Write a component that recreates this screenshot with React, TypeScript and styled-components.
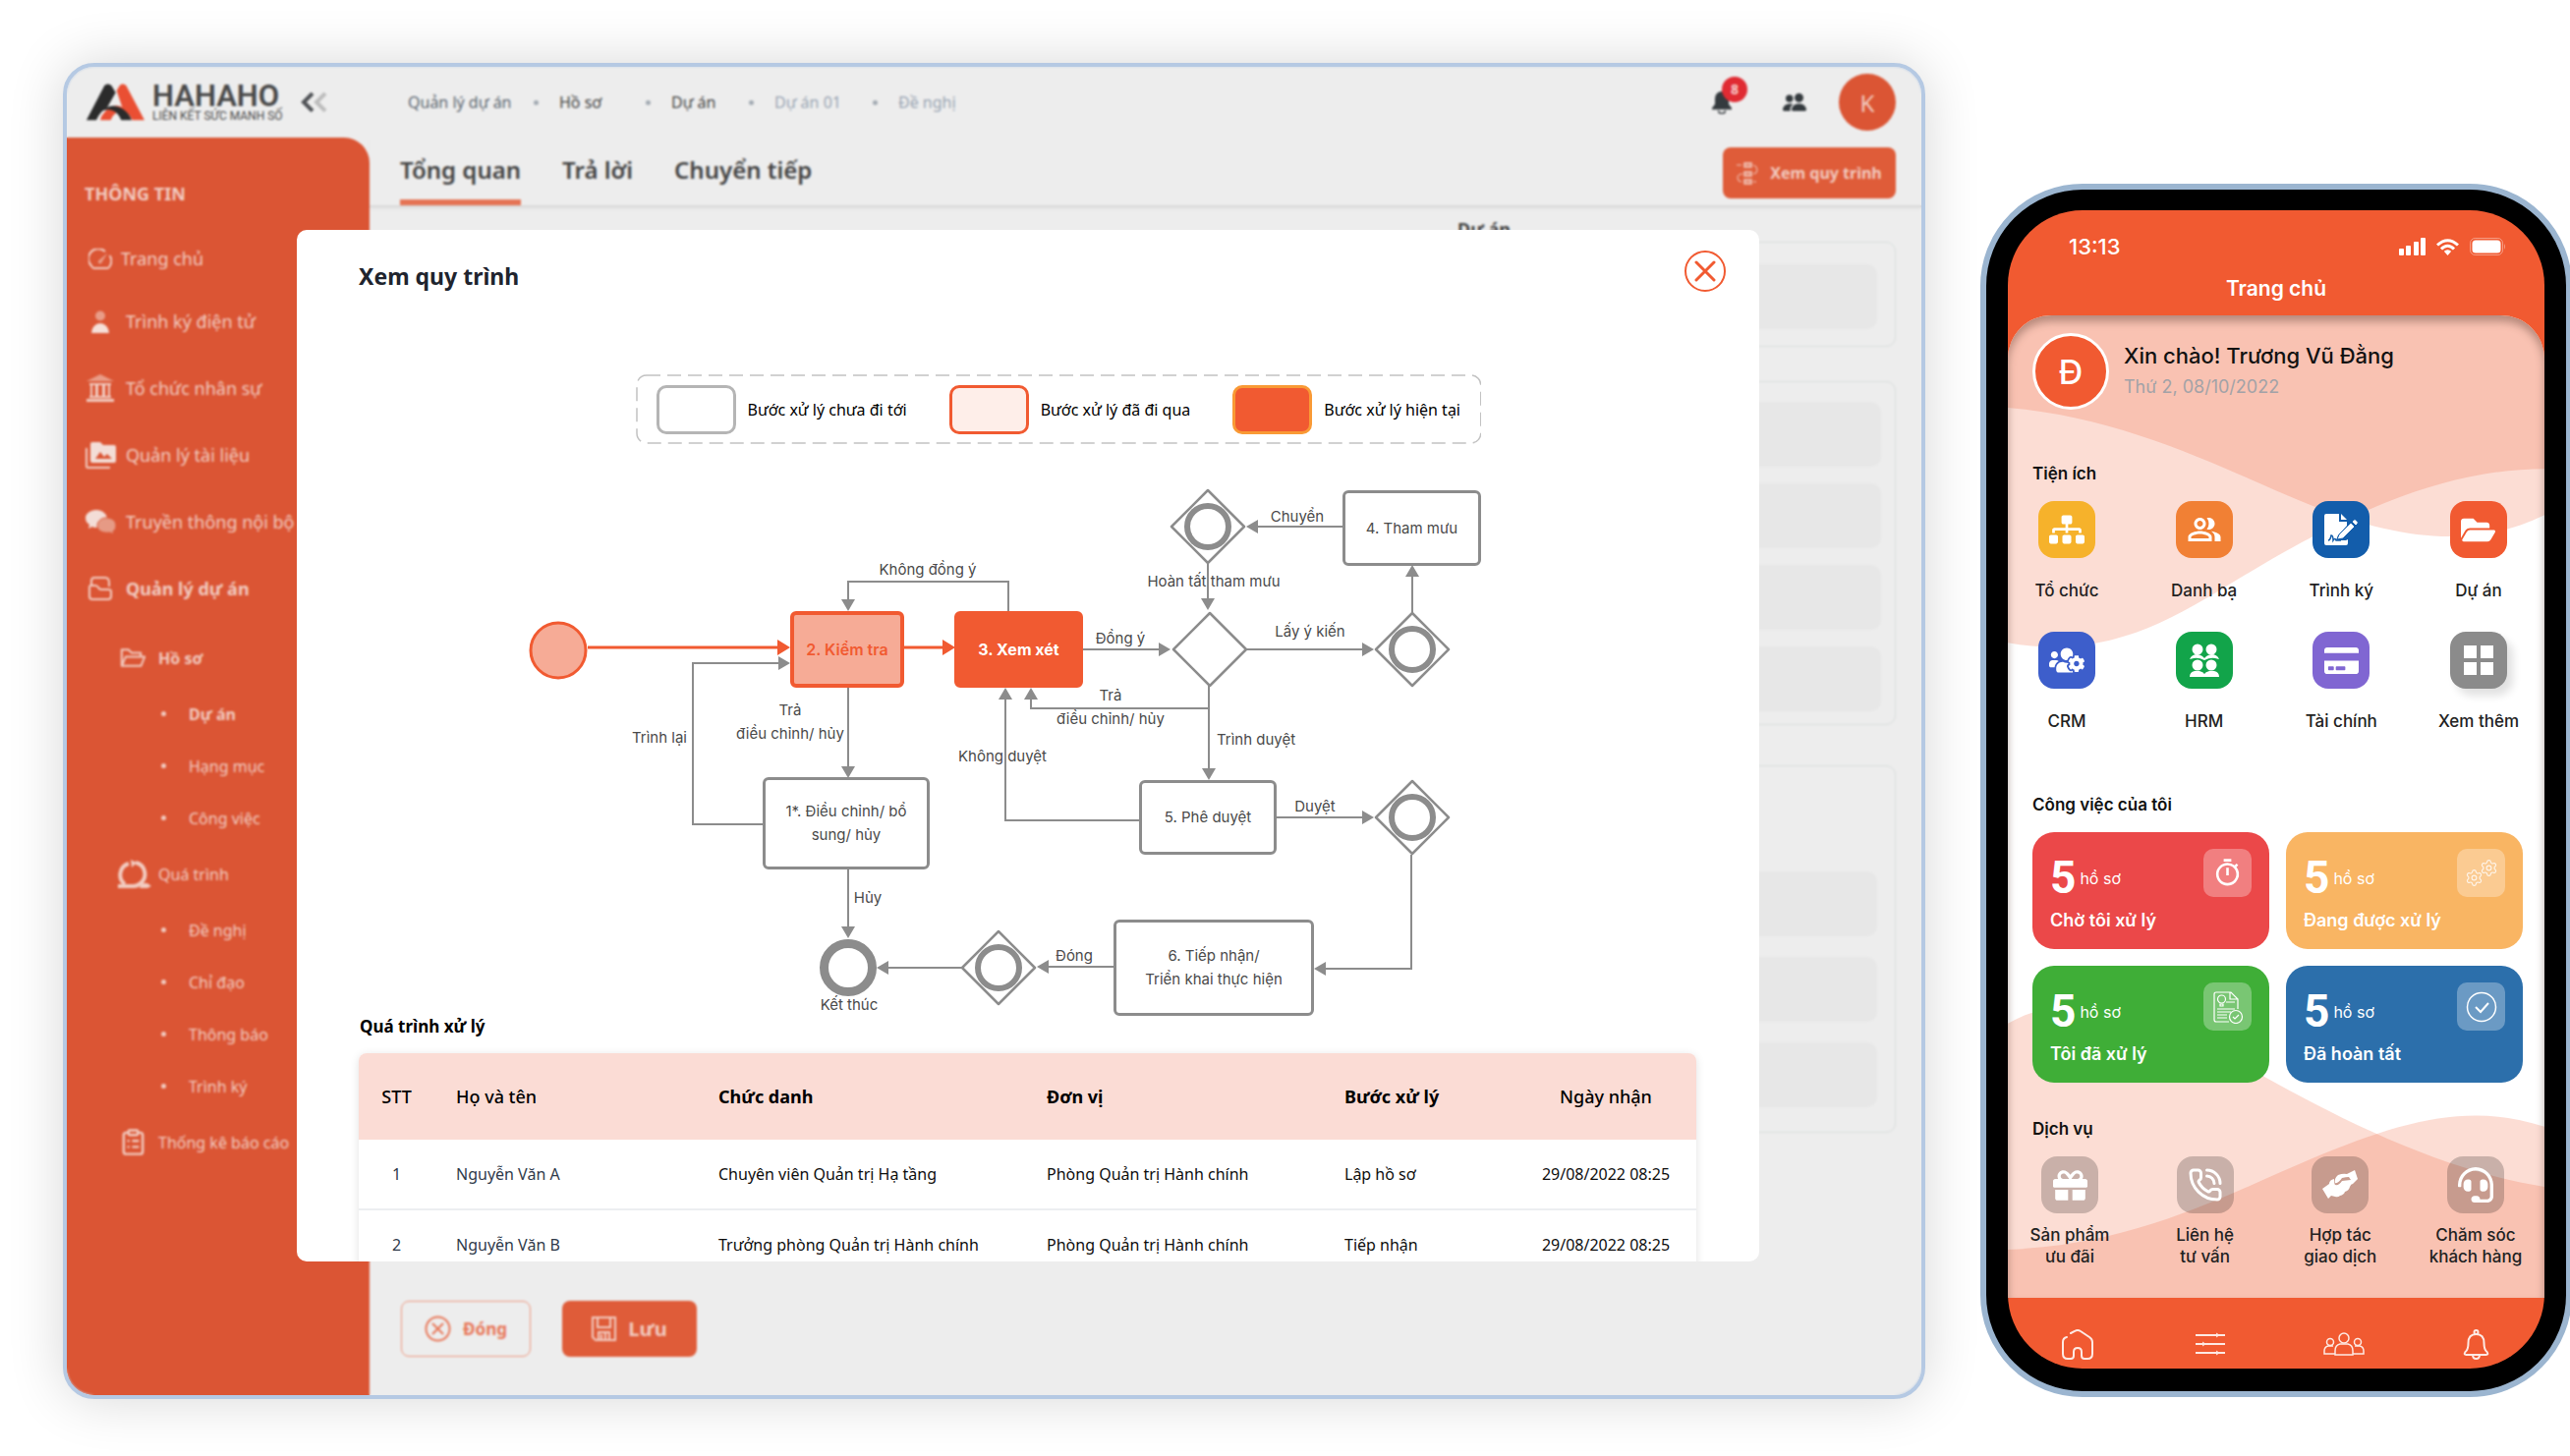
import React from "react";
import styled, { createGlobalStyle, css } from "styled-components";
import {
  FaSitemap,
  FaFolderOpen,
  FaUsersCog,
  FaCreditCard,
  FaGift,
  FaHeadset,
} from "react-icons/fa";
import { MdOutlinePeopleAlt, MdOutlineTimer } from "react-icons/md";
import { AiOutlineFolderOpen } from "react-icons/ai";
import { BsPeopleFill } from "react-icons/bs";
import { ClipboardList, PhoneCall, Settings } from "lucide-react";

const color = {
  brand: "#f15a31",
  brandDim: "#db5534",
  brandButton: "#df5c39",
  brandSoft: "#f6ab96",
  brandPale: "#feeee9",
  onBrandDim: "#f2cbc0",
  shell: "#ededed",
  field: "#e7e7e7",
  fieldLine: "#d8dddc",
  frame: "#b5c9e3",
  phoneFrame: "#9bb5d0",
  flow: "#8c8c8c",
  flowText: "#4a4a4a",
  tableHead: "#fbdcd5",
};

const fontUi = `"Noto Sans", "Open Sans", sans-serif`;
const fontFlow = `Inter, "Noto Sans", sans-serif`;

const GlobalStyle = createGlobalStyle`
  *, *::before, *::after { box-sizing: border-box; }
  body { margin: 0; background: #fff; font-family: ${fontUi}; overflow-x: hidden; }
  button { font: inherit; border: 0; background: none; padding: 0; color: inherit; cursor: pointer; }
  a { color: inherit; text-decoration: none; }
  ul, ol { list-style: none; margin: 0; padding: 0; }
  h1, h2, h3, p { margin: 0; }
  svg { display: block; flex: none; }
`;

const Page = styled.main`
  display: flex;
  align-items: flex-end;
  gap: 56px;
  min-height: 100vh;
  padding: 64px 0 58px 64px;
  overflow-x: hidden;
`;

/* ---------- desktop window ---------- */

const Window = styled.section`
  position: relative;
  flex: 1;
  min-width: 0;
  min-height: calc(100vh - 122px);
  display: flex;
  flex-direction: column;
  background: ${color.shell};
  border: 4px solid ${color.frame};
  border-radius: 32px;
  overflow: hidden;
  box-shadow: 0 0 56px rgba(0, 0, 0, 0.16);
`;

const TopBar = styled.header`
  display: flex;
  align-items: center;
  height: 72px;
  padding: 0 26px 0 20px;
`;

const Brand = styled.a`
  display: flex;
  align-items: center;
  gap: 8px;
  width: 218px;
  color: #4a4a4a;
  font-family: Roboto, sans-serif;
`;

const BrandText = styled.span`
  display: flex;
  flex-direction: column;
`;

const BrandName = styled.strong`
  font-size: 31px;
  line-height: 28px;
  font-weight: 600;
`;

const BrandTag = styled.small`
  font-size: 12px;
  line-height: 12px;
`;

const Crumbs = styled.ol`
  display: grid;
  grid-template-columns: 128px 114px 105px 126px auto;
  margin-left: 81px;
  font-size: 16px;
  line-height: 24px;
`;

const Crumb = styled.li<{ $tone: string }>`
  display: flex;
  align-items: center;
  gap: 21px;
  color: ${(p) => p.$tone};
  white-space: nowrap;

  &:not(:first-child)::before {
    content: "";
    width: 5px;
    height: 5px;
    border-radius: 50%;
    background: #a3abb3;
  }
`;

const TopActions = styled.div`
  display: flex;
  align-items: center;
  margin-left: auto;
  color: #343a3e;
`;

const IconButton = styled.button`
  position: relative;
  display: grid;
  place-items: center;
  width: 24px;
  height: 24px;
  margin-right: 50px;
`;

const Badge = styled.span`
  position: absolute;
  left: 12px;
  top: -14px;
  width: 26px;
  height: 26px;
  border-radius: 50%;
  background: #e02b33;
  color: #f7d0cf;
  font-size: 14px;
  line-height: 26px;
  font-weight: 700;
  text-align: center;
`;

const Avatar = styled.button`
  width: 58px;
  height: 58px;
  margin-left: -17px;
  border-radius: 50%;
  background: ${color.brandDim};
  color: ${color.onBrandDim};
  font-size: 24px;
`;

const Columns = styled.div`
  flex: 1;
  display: flex;
`;

const Sidebar = styled.nav`
  width: 308px;
  flex: none;
  background: ${color.brandDim};
  border-top-right-radius: 26px;
  color: ${color.onBrandDim};
  font-size: 18px;
`;

const SidebarTitle = styled.h2`
  padding: 45px 18px 24px;
  font-size: 18px;
  line-height: 24px;
  font-weight: 700;
`;

const MainLink = styled.a<{ $first?: boolean; $active?: boolean }>`
  display: flex;
  align-items: center;
  gap: ${(p) => (p.$first ? 6 : 11)}px;
  height: ${(p) => (p.$first ? 60 : 68)}px;
  padding-left: 19px;
  white-space: nowrap;
  font-weight: ${(p) => (p.$active ? 700 : 400)};
`;

const IconSlot = styled.span`
  display: grid;
  place-items: center;
  width: 30px;
`;

const SubMenu = styled.ul`
  padding-top: 6px;
  font-size: 16px;
`;

const SubLink = styled.a<{ $active?: boolean }>`
  display: flex;
  align-items: center;
  gap: 11px;
  height: 61px;
  padding-left: 52px;
  white-space: nowrap;
  font-weight: ${(p) => (p.$active ? 700 : 400)};
`;

const LeafLink = styled.a<{ $active?: boolean }>`
  display: flex;
  align-items: center;
  gap: 23px;
  height: 53px;
  padding-left: 96px;
  font-weight: ${(p) => (p.$active ? 700 : 400)};

  &::before {
    content: "";
    width: 5px;
    height: 5px;
    border-radius: 50%;
    background: currentColor;
  }
`;

const Content = styled.div`
  flex: 1;
  min-width: 0;
  display: flex;
  flex-direction: column;
`;

const TabBar = styled.div`
  display: flex;
  align-items: stretch;
  height: 71px;
  padding: 0 26px 0 31px;
  border-bottom: 2px solid #d9d9d9;
  box-shadow: 0 2px 3px rgba(0, 0, 0, 0.04);
`;

const Tab = styled.button<{ $active?: boolean }>`
  margin-right: 42px;
  padding-top: 2px;
  border-bottom: 6px solid ${(p) => (p.$active ? "#e57455" : "transparent")};
  color: #444;
  font-size: 24px;
  font-weight: 600;
`;

const ActionButton = styled.button<{ $outline?: boolean }>`
  display: flex;
  align-items: center;
  justify-content: center;
  border-radius: 8px;
  font-weight: 700;
  ${(p) =>
    p.$outline
      ? css`
          border: 1px solid #ee967d;
          color: #e8785a;
        `
      : css`
          background: ${color.brandButton};
          color: ${color.onBrandDim};
        `}
`;

const FlowButton = styled(ActionButton)`
  gap: 12px;
  width: 176px;
  height: 52px;
  margin: 10px 0 0 auto;
  font-size: 16px;
`;

const Form = styled.form`
  flex: 1;
  display: flex;
  flex-direction: column;
  padding: 9px 26px 39px 32px;
`;

const FieldLabels = styled.div`
  display: grid;
  grid-template-columns: minmax(0, 1fr) 446px;
  font-size: 18px;
  line-height: 26px;
  font-weight: 700;
  color: #444;

  label {
    grid-column: 2;
  }
`;

const FieldPanel = styled.fieldset<{ $pad: string; $gap: number; $space: number }>`
  display: flex;
  flex-direction: column;
  gap: ${(p) => p.$gap}px;
  min-width: 0;
  margin: 0 0 ${(p) => p.$space}px;
  padding: ${(p) => p.$pad};
  border: 1px solid ${color.fieldLine};
  border-radius: 10px;
`;

const Field = styled.input`
  width: 100%;
  height: 66px;
  border: 0;
  border-radius: 10px;
  background: ${color.field};
`;

const FormActions = styled.div`
  display: flex;
  gap: 32px;
  margin-top: auto;
`;

const FormButton = styled(ActionButton)<{ $size: number }>`
  gap: 12px;
  width: ${(p) => (p.$outline ? 132 : 137)}px;
  height: 57px;
  font-size: ${(p) => p.$size}px;
`;

/* ---------- dialog ---------- */

const Overlay = styled.div`
  position: absolute;
  inset: 0;
  display: flex;
  padding: 166px 165px 136px 234px;
  backdrop-filter: blur(1px);
`;

const Dialog = styled.section`
  flex: 1;
  min-width: 0;
  background: #fff;
  border-radius: 10px;
  overflow: hidden;
`;

const DialogHeader = styled.header`
  display: flex;
  align-items: flex-end;
  justify-content: space-between;
  padding: 21px 34px 0 63px;

  h1 {
    font-size: 23px;
    line-height: 32px;
    font-weight: 700;
    color: #20242e;
  }
`;

const CloseButton = styled.button`
  display: grid;
  place-items: center;
  width: 42px;
  height: 42px;
  border: 2px solid ${color.brand};
  border-radius: 50%;
  color: ${color.brand};
`;

const Flow = styled.figure`
  display: flex;
  flex-direction: column;
  width: 970px;
  margin: 84px 0 0 235px;
`;

const Legend = styled.ul`
  position: relative;
  align-self: flex-end;
  display: flex;
  align-items: center;
  gap: 43px;
  height: 71px;
  padding: 0 21px;
  font-size: 16px;
  line-height: 24px;

  > svg {
    position: absolute;
    inset: 0;
    width: 100%;
    height: 100%;
  }
`;

const LegendItem = styled.li`
  display: flex;
  align-items: center;
  gap: 12px;
  white-space: nowrap;
`;

const Swatch = styled.span<{ $line: string; $fill: string }>`
  width: 81px;
  height: 50px;
  border: 3px solid ${(p) => p.$line};
  border-radius: 10px;
  background: ${(p) => p.$fill};
`;

const Canvas = styled.div`
  position: relative;
  height: 543px;
  margin-top: 38px;
  font-family: ${fontFlow};
  font-size: 15px;
  line-height: 24px;
  color: ${color.flowText};

  > svg {
    position: absolute;
    inset: 0;
    overflow: visible;
  }
`;

type NodeKind = "idle" | "passed" | "current";

const Node = styled.div<{ $x: number; $y: number; $w: number; $h: number; $kind: NodeKind }>`
  position: absolute;
  left: ${(p) => p.$x}px;
  top: ${(p) => p.$y}px;
  width: ${(p) => p.$w}px;
  height: ${(p) => p.$h}px;
  display: grid;
  place-content: center;
  text-align: center;
  white-space: pre-line;
  border: 3px solid ${color.flow};
  border-radius: 6px;
  ${(p) =>
    p.$kind === "passed" &&
    css`
      border: 4px solid ${color.brand};
      background: ${color.brandSoft};
      color: ${color.brand};
      font-size: 16px;
      font-weight: 600;
    `}
  ${(p) =>
    p.$kind === "current" &&
    css`
      border-color: ${color.brand};
      background: ${color.brand};
      color: #fff;
      font-size: 16px;
      font-weight: 700;
    `}
`;

const EdgeLabel = styled.span<{ $x: number; $y: number }>`
  position: absolute;
  left: ${(p) => p.$x}px;
  top: ${(p) => p.$y}px;
  transform: translate(-50%, -50%);
  white-space: pre;
  text-align: center;
`;

const History = styled.section`
  padding: 0 64px 0 63px;

  h2 {
    margin-bottom: 15px;
    padding-left: 1px;
    font-size: 17px;
    line-height: 24px;
    font-weight: 700;
  }
`;

const Table = styled.table`
  width: 100%;
  table-layout: fixed;
  border-collapse: separate;
  border-spacing: 0;
  border-radius: 8px;
  overflow: hidden;
  box-shadow: 0 2px 10px rgba(0, 0, 0, 0.12);
  font-size: 16px;
  line-height: 24px;
`;

const HeadCell = styled.th<{ $strong?: boolean; $center?: boolean }>`
  height: 88px;
  padding: 0 22px;
  background: ${color.tableHead};
  text-align: ${(p) => (p.$center ? "center" : "left")};
  white-space: nowrap;
  font-size: 18px;
  font-weight: ${(p) => (p.$strong ? 700 : 500)};
  color: #000;
`;

const Cell = styled.td<{ $center?: boolean; $muted?: boolean }>`
  height: 72px;
  padding: 0 0 0 ${(p) => (p.$center ? 0 : 22)}px;
  border-bottom: 2px solid #eceef1;
  text-align: ${(p) => (p.$center ? "center" : "left")};
  white-space: nowrap;
  color: ${(p) => (p.$muted ? "#2f3a4a" : "#0d0d0d")};
`;

/* ---------- phone ---------- */

const Phone = styled.section`
  flex: none;
  width: 602px;
  margin: 0 -2px 2px 0;
  padding: 21px 22px 23px;
  border: 6px solid ${color.phoneFrame};
  border-radius: 104px;
  background: #000;
  font-family: ${fontFlow};
`;

const Screen = styled.div`
  display: flex;
  flex-direction: column;
  border-radius: 76px;
  overflow: hidden;
  background: ${color.brand};
`;

const StatusBar = styled.div`
  display: flex;
  align-items: center;
  justify-content: space-between;
  height: 50px;
  padding: 24px 39px 0 62px;
  color: #fff;
  font-size: 22px;
  font-weight: 500;
`;

const StatusIcons = styled.span`
  display: flex;
  align-items: center;
  gap: 11px;
`;

const ScreenTitle = styled.h2`
  margin: 16px 0 13px;
  text-align: center;
  color: #fff;
  font-size: 21px;
  line-height: 28px;
  font-weight: 600;
`;

const ScreenBody = styled.div`
  position: relative;
  isolation: isolate;
  padding: 18px 22px 31px 25px;
  border-radius: 44px 44px 0 0;
  background: #fff;
  overflow: hidden;

  &::after {
    content: "";
    position: absolute;
    inset: 0;
    border-radius: inherit;
    box-shadow: inset 0 6px 8px rgba(80, 50, 40, 0.4);
    pointer-events: none;
  }
`;

const Waves = styled.svg`
  position: absolute;
  inset: 0;
  width: 100%;
  height: 100%;
  z-index: -1;
  fill: ${color.brand};
  fill-opacity: 0.206;
`;

const Profile = styled.div`
  display: flex;
  align-items: center;
  gap: 15px;
`;

const ProfileAvatar = styled.span`
  display: grid;
  place-items: center;
  width: 78px;
  height: 78px;
  border: 3px solid #fff;
  border-radius: 50%;
  background: ${color.brand};
  color: #fff;
  font-size: 34px;
  font-weight: 500;
`;

const ProfileText = styled.div`
  line-height: 32px;

  h3 {
    font-size: 22px;
    font-weight: 500;
    color: #111;
  }

  p {
    font-size: 18px;
    color: #a3a2a7;
  }
`;

const SectionTitle = styled.h3<{ $top: number }>`
  margin-top: ${(p) => p.$top}px;
  margin-bottom: 16px;
  font-size: 17px;
  line-height: 24px;
  font-weight: 600;
  color: #111;
`;

const TileGrid = styled.ul<{ $gap: number; $margin: string }>`
  display: grid;
  grid-template-columns: repeat(4, 96px);
  justify-content: space-between;
  gap: ${(p) => p.$gap}px 0;
  margin: ${(p) => p.$margin};
`;

const TileButton = styled.button<{ $gap: number }>`
  display: flex;
  flex-direction: column;
  align-items: center;
  gap: ${(p) => p.$gap}px;
  width: 100%;
  font-size: 17px;
  line-height: 22px;
  font-weight: 500;
  color: #222;
  white-space: pre;
`;

const TileIcon = styled.span<{ $bg: string; $raised?: boolean }>`
  display: grid;
  place-items: center;
  width: 58px;
  height: 58px;
  border-radius: 16px;
  background: ${(p) => p.$bg};
  color: #fff;
  box-shadow: ${(p) => (p.$raised ? "6px 7px 8px rgba(0,0,0,.12)" : "none")};
`;

const Cards = styled.ul`
  display: grid;
  grid-template-columns: 1fr 1fr;
  gap: 17px;
`;

const Card = styled.li<{ $bg: string }>`
  display: grid;
  grid-template-columns: 1fr 49px;
  align-content: start;
  align-items: start;
  height: 119px;
  padding: 17px 18px 0;
  border-radius: 22px;
  background: ${(p) => p.$bg};
  color: #fff;
`;

const Count = styled.p`
  display: flex;
  align-items: center;
  gap: 4px;
  height: 60px;
  font-size: 16px;
  line-height: 56px;

  strong {
    height: 60px;
    font-family: Roboto, sans-serif;
    font-size: 46px;
    line-height: 58px;
  }
`;

const CardIcon = styled.span`
  display: grid;
  place-items: center;
  width: 49px;
  height: 49px;
  border-radius: 10px;
  background: rgba(255, 255, 255, 0.3);
`;

const CardLabel = styled.h4`
  grid-column: 1 / -1;
  margin: 0;
  font-size: 18px;
  line-height: 26px;
  font-weight: 600;
`;

const BottomNav = styled.nav`
  display: flex;
  justify-content: space-between;
  align-items: center;
  height: 72px;
  padding: 22px 48px 0 50px;

  a {
    display: grid;
    place-items: center;
    width: 42px;
    color: #fdeae4;
  }
`;

/* ---------- icons ---------- */

const Logo = () => (
  <svg width="59" height="38" viewBox="0 0 177 114" aria-hidden="true">
    <path d="M92 22 L102 5 Q112 -3 121 6 L177 112 L140 112 Q130 92 110 76 Z" fill="#ea4f33" />
    <path d="M42 112 Q50 80 84 68 Q112 64 130 94 Q106 78 90 90 Q78 98 74 112 Z" fill="#ea4f33" />
    <path d="M55 6 Q65 -3 76 6 L89 28 L64 72 Q42 84 30 112 L0 112 Z" fill="#2b2b2b" />
    <path d="M40 88 Q74 56 108 76 Q130 90 138 112 L106 112 Q96 84 72 80 Q54 78 40 88 Z" fill="#2b2b2b" />
  </svg>
);

const Collapse = () => (
  <svg width="28" height="20" viewBox="0 0 28 20" fill="none" strokeWidth="4">
    <path d="M12 1 L3 10 L12 19" stroke="#505357" />
    <path d="M25 1 L16 10 L25 19" stroke="#bdbdbd" />
  </svg>
);

const BellSolid = () => (
  <svg width="20" height="23" viewBox="0 0 20 23" fill="currentColor">
    <path d="M10 0a7 7 0 0 0-7 7v6l-3 4v1.500h20V17l-3-4V7a7 7 0 0 0-7-7z" />
    <path d="M6.500 19.500a3.500 3 0 0 0 7 0" fill="none" stroke="currentColor" strokeWidth="1.500" />
  </svg>
);

const Dial = () => (
  <svg width="24" height="21" viewBox="0 0 24 21" fill="none" stroke="currentColor" strokeWidth="2">
    <path d="M17 3A10 10 0 0 0 3 17.500Q4 20 6 20H19Q21 20 22 17.500A10 10 0 0 0 21.500 7" />
    <path d="M19.500 4.500L10 12.500a2 2 0 0 0 3 2.500z" fill="currentColor" stroke="none" opacity=".6" />
  </svg>
);

const Person = () => (
  <svg width="18" height="23" viewBox="0 0 18 23" fill="currentColor">
    <circle cx="9" cy="5.500" r="5" opacity=".6" />
    <path d="M0 23a9 10 0 0 1 18 0z" fill="#f6dfd8" />
  </svg>
);

const Bank = () => (
  <svg width="28" height="28" viewBox="0 0 28 28" fill="currentColor">
    <path d="M14 0L28 7H0z" opacity=".6" />
    <path d="M3 9h22v2H3zM4 11h2v12H4zM9 11h3v12H9zM16 11h3v12h-3zM22 11h2v12h-2zM3 22h22v2H3zM0 25h28v3H0z" />
  </svg>
);

const PhotoFolder = () => (
  <svg width="31" height="27" viewBox="0 0 31 27" fill="#f3ddd7">
    <path d="M1 6v18.500q0 1.500 1.500 1.500H25" fill="none" stroke="currentColor" strokeWidth="2" />
    <path d="M7 0h8l3 3h11a2 2 0 0 1 2 2v14a2 2 0 0 1-2 2H7a2 2 0 0 1-2-2V2a2 2 0 0 1 2-2z" />
    <path d="M10 17l5-7 4 5 3-3 5 5z" fill={color.brandDim} />
  </svg>
);

const Chat = () => (
  <svg width="31" height="25" viewBox="0 0 31 25">
    <path d="M11 0c6 0 11 4 11 9 0 6-5 9-10 9-2 0-4 0-5-1l-4 2 1-4C1 13 0 11 0 8 0 4 5 0 11 0z" fill="#f3ddd7" />
    <path
      d="M21 8c6 0 10 3 10 8 0 3-1 4-3 6l1 3-4-2c-8 1-13-2-13-7 0-4 4-8 9-8z"
      fill="#e69a85"
      stroke={color.brandDim}
      strokeWidth="1"
    />
  </svg>
);

const FolderOutline = () => (
  <svg width="24" height="24" viewBox="0 0 24 24" fill="none" stroke="currentColor" strokeWidth="2">
    <path d="M3 10V4q0-3 3-3h11q4 0 4 5v4" />
    <path d="M1 11q0-3 3-2h3q2 0 3 2t3 2h7q3 0 3 2v5q0 3-3 3H4q-3 0-3-3z" />
  </svg>
);

const Loop = () => (
  <svg width="34" height="29" viewBox="0 0 34 29" fill="none" stroke="currentColor" strokeWidth="4">
    <path d="M7 25A12 12 0 0 1 11 4M18 3A12 12 0 0 1 23 24Q20 27 16 27H0" />
    <path d="M13 0l6 3-5 5zM24 24h6l4 3-4 2h-8z" fill="currentColor" stroke="none" />
  </svg>
);

const Steps = () => (
  <svg width="22" height="23" viewBox="0 0 22 23" fill="none" stroke="currentColor">
    <path d="M8 1h7v4H8zM8 10h7v4H8zM8 18h7v4H8z" fill="currentColor" fillOpacity=".4" strokeWidth="1.500" />
    <path d="M0 3h5M17 3q4 1 4 5t-4 4M6 12q-5 0-5 4t4 4M17 20h3" />
  </svg>
);

const CircleX = () => (
  <svg width="27" height="27" viewBox="0 0 27 27" fill="none" stroke="currentColor" strokeWidth="2">
    <circle cx="13.500" cy="13.500" r="12" />
    <path d="M8 8l11 11M19 8L8 19" />
  </svg>
);

const Floppy = () => (
  <svg width="25" height="25" viewBox="0 0 25 25" fill="none" stroke="currentColor" strokeWidth="2">
    <path d="M1 1h23v23H4l-3-3zM6 1v10h13V1M7 24v-8h11v8M10 18v5M14 17v6" />
  </svg>
);

const Cross = () => (
  <svg width="22" height="22" viewBox="0 0 22 22" stroke="currentColor" strokeWidth="3" strokeLinecap="round">
    <path d="M2 2l18 18M20 2L2 20" />
  </svg>
);

const Signal = () => (
  <svg width="27" height="18" viewBox="0 0 27 18" fill="currentColor">
    <rect x="0" y="11" width="5" height="7" rx="1" />
    <rect x="7" y="8" width="5" height="10" rx="1" />
    <rect x="15" y="4" width="5" height="14" rx="1" />
    <rect x="22" y="0" width="5" height="18" rx="1" />
  </svg>
);

const Wifi = () => (
  <svg width="23" height="17" viewBox="0 0 23 17" fill="none" stroke="currentColor" strokeWidth="3">
    <path d="M1 6.500Q11.500-3 22 6.500M5 10.500Q11.500 4 18 10.500" />
    <path d="M7.800 12.800Q11.500 9.500 15.200 12.800L11.500 17z" fill="currentColor" stroke="none" />
  </svg>
);

const Battery = () => (
  <svg width="37" height="18" viewBox="0 0 37 18">
    <rect x=".5" y=".5" width="33" height="17" rx="5" fill="none" stroke="#fff" opacity=".4" />
    <rect x="2.500" y="2.500" width="29" height="13" rx="3.500" fill="#fff" />
    <path d="M35 6q2 3 0 6z" fill="#fff" opacity=".4" />
  </svg>
);

const SignDoc = () => (
  <svg width="36" height="34" viewBox="0 0 36 34">
    <path d="M3 1h13v8h8v4l-9 10-2 5h10l2-1v4q0 2-2 2H3q-2 0-2-2V3q0-2 2-2z" fill="#fff" />
    <path d="M18 1l6 6h-6z" fill="#fff" />
    <path d="M5 28q2 0 3-5 2 0 2 5 2-3 3 0h5" fill="none" stroke="#135dab" strokeWidth="1.500" />
    <path d="M16 22L28 10l4 4-12 12-6 1zM29 9l2-2q1-1 3 1t1 3l-2 2z" fill="#fff" stroke="#135dab" strokeWidth="1" />
  </svg>
);

const FourPeople = () => (
  <svg width="30" height="34" viewBox="0 0 30 34" fill="currentColor">
    <circle cx="8" cy="6" r="5.500" />
    <circle cx="22" cy="6" r="5.500" />
    <path d="M0 16q2-5 8-5 5 1 7 4 2-3 7-4 6 0 8 5l-4-1q-5-1-11 2-6-3-11-2z" />
    <circle cx="8" cy="22" r="5.500" />
    <circle cx="22" cy="22" r="5.500" />
    <path d="M0 34q0-5 5-6h5q4 1 5 3 1-2 5-3h5q5 1 5 6z" />
  </svg>
);

const Squares = () => (
  <svg width="30" height="30" viewBox="0 0 30 30" fill="currentColor">
    <path d="M0 0h13v13H0zM17 0h13v13H17zM0 17h13v13H0zM17 17h13v13H17z" />
  </svg>
);

const Gears = () => (
  <svg width="36" height="30" viewBox="0 0 36 30" opacity=".8">
    <g transform="translate(1 10)">
      <Settings width={19} height={19} strokeWidth={1.5} />
    </g>
    <g transform="translate(16 0)">
      <Settings width={19} height={19} strokeWidth={1.5} />
    </g>
  </svg>
);

const ReviewDoc = () => (
  <svg width="32" height="34" viewBox="0 0 32 34" fill="none" stroke="currentColor" strokeWidth="1.200">
    <path d="M17 32H4q-2 0-2-2V4q0-2 2-2h15l7 7v10M18 2v7h8" />
    <circle cx="9.500" cy="9" r="4" />
    <path d="M8 14h3v2H8zM14 12h9M5 19h18M5 22h14M5 25h10M5 28h10" />
    <circle cx="24" cy="27" r="6.500" />
    <path d="M21 27l2 2 4-4" />
  </svg>
);

const CheckThin = () => (
  <svg width="32" height="32" viewBox="0 0 32 32" fill="none" stroke="currentColor" strokeWidth="1.500">
    <circle cx="16" cy="16" r="14.500" />
    <path d="M10 16l5 5 8-9" strokeWidth="2" />
  </svg>
);

const Handshake = () => (
  <svg width="36" height="30" viewBox="0 0 36 30" fill="currentColor">
    <path d="M33 0l3 9-5 5q-2 0-3 3-1 4-5 5-1 3-5 4-2 2-5 1l-4-1-3 3-6-10 7-5q0-4 5-5 0 5 1 6 4 1 7-4l9-1-2-3q-3 0-7 1-4 6-7 5-1-5 3-8 5-2 9-1z" />
  </svg>
);

const Home = () => (
  <svg width="32" height="32" viewBox="0 0 32 32" fill="none" stroke="currentColor" strokeWidth="2" strokeLinecap="round">
    <path d="M5 9q-4 1-4 5v12q0 5 5 5h3q3 0 3-3v-4q0-4 4-4t4 4v4q0 3 3 3h3q5 0 5-5V14q0-3-3-5l-9-6q-3-2-6 0l-4 2" />
  </svg>
);

const Sliders = () => (
  <svg width="30" height="24" viewBox="0 0 30 24" fill="none" stroke="currentColor" strokeWidth="2">
    <path d="M0 3h30M0 12h30M0 21h30" />
    <path d="M21 1l3 2-3 2M7 10l3 2-3 2M21 19l3 2-3 2" strokeWidth="1" />
  </svg>
);

const People = () => (
  <svg width="42" height="24" viewBox="0 0 42 24" fill="none" stroke="currentColor" strokeWidth="1.500">
    <circle cx="21" cy="6" r="5" />
    <path d="M12 23v-4q0-6 5-7h8q5 1 5 7v4z" />
    <circle cx="7" cy="10" r="3.500" />
    <circle cx="35" cy="10" r="3.500" />
    <path d="M12 22H1v-3q0-4 4-5h5M30 22h11v-3q0-4-4-5h-5" />
  </svg>
);

const BellThin = () => (
  <svg width="27" height="31" viewBox="0 0 27 31" fill="none" stroke="currentColor" strokeWidth="2">
    <circle cx="13.500" cy="3" r="2" />
    <path d="M13.500 5q-8 0-8 9 0 7-3 9-2 3 1 3h20q3 0 1-3-3-2-3-9 0-9-8-9zM10 26q0 4 3.500 4t3.500-4" />
  </svg>
);

/* ---------- flow chart drawing ---------- */

type Dir = "up" | "down" | "left" | "right";
const headAngle: Record<Dir, number> = { right: 0, down: 90, left: 180, up: 270 };

type EdgeProps = { d: string; x: number; y: number; dir: Dir; hot?: boolean };

const Edge = ({ d, x, y, dir, hot }: EdgeProps) => (
  <g fill="none" stroke={hot ? color.brand : color.flow} strokeWidth={hot ? 3 : 2}>
    <path d={d} />
    <path
      d={hot ? "M0 0L-13-8V8z" : "M0 0L-12-7V7z"}
      transform={`translate(${x} ${y}) rotate(${headAngle[dir]})`}
      fill={hot ? color.brand : color.flow}
      stroke="none"
    />
  </g>
);

const edges: EdgeProps[] = [
  { d: "M61 169H256", x: 267, y: 169, dir: "right", hot: true },
  { d: "M383 169H424", x: 435, y: 169, dir: "right", hot: true },
  { d: "M489 132V102H326V122", x: 326, y: 132, dir: "down" },
  { d: "M239 349H168V185H256", x: 267, y: 185, dir: "right" },
  { d: "M326 210V292", x: 326, y: 302, dir: "down" },
  { d: "M326 395V455", x: 326, y: 465, dir: "down" },
  { d: "M441 495H366", x: 355, y: 495, dir: "left" },
  { d: "M596 494H528", x: 518, y: 494, dir: "left" },
  { d: "M829 46H742", x: 731, y: 46, dir: "left" },
  { d: "M692 84V120", x: 692, y: 131, dir: "down" },
  { d: "M565 171H644", x: 654, y: 171, dir: "right" },
  { d: "M732 171H850", x: 861, y: 171, dir: "right" },
  { d: "M900 133V96", x: 900, y: 85, dir: "up" },
  { d: "M693 208V294", x: 693, y: 304, dir: "down" },
  { d: "M693 231H512V220", x: 512, y: 210, dir: "up" },
  { d: "M622 345H486V220", x: 486, y: 210, dir: "up" },
  { d: "M762 342H850", x: 861, y: 342, dir: "right" },
  { d: "M899 380V496H810", x: 800, y: 496, dir: "left" },
];

const gateways = [
  { x: 692, y: 46, ring: true },
  { x: 694, y: 171, ring: false },
  { x: 900, y: 171, ring: true },
  { x: 900, y: 342, ring: true },
  { x: 479, y: 495, ring: true },
];

const nodes: { x: number; y: number; w: number; h: number; kind: NodeKind; text: string }[] = [
  { x: 267, y: 132, w: 116, h: 78, kind: "passed", text: "2. Kiểm tra" },
  { x: 434, y: 132, w: 131, h: 78, kind: "current", text: "3. Xem xét" },
  { x: 239, y: 301, w: 170, h: 94, kind: "idle", text: "1*. Điều chỉnh/ bổ\nsung/ hủy" },
  { x: 829, y: 9, w: 141, h: 77, kind: "idle", text: "4. Tham mưu" },
  { x: 622, y: 304, w: 140, h: 76, kind: "idle", text: "5. Phê duyệt" },
  { x: 596, y: 446, w: 204, h: 98, kind: "idle", text: "6. Tiếp nhận/\nTriển khai thực hiện" },
];

const edgeLabels = [
  { x: 407, y: 90, text: "Không đồng ý" },
  { x: 134, y: 261, text: "Trình lại" },
  { x: 267, y: 245, text: "Trả\nđiều chỉnh/ hủy" },
  { x: 346, y: 424, text: "Hủy" },
  { x: 327, y: 533, text: "Kết thúc" },
  { x: 556, y: 483, text: "Đóng" },
  { x: 783, y: 36, text: "Chuyển" },
  { x: 698, y: 102, text: "Hoàn tất tham mưu" },
  { x: 603, y: 160, text: "Đồng ý" },
  { x: 796, y: 153, text: "Lấy ý kiến" },
  { x: 741, y: 263, text: "Trình duyệt" },
  { x: 593, y: 230, text: "Trả\nđiều chỉnh/ hủy" },
  { x: 483, y: 280, text: "Không duyệt" },
  { x: 801, y: 331, text: "Duyệt" },
];

const FlowChart = () => (
  <Canvas>
    <svg width="970" height="543" aria-hidden="true">
      {edges.map((e) => (
        <Edge key={e.d} {...e} />
      ))}
      {gateways.map((g) => (
        <g key={`${g.x}-${g.y}`} transform={`translate(${g.x} ${g.y})`} fill="#fff" stroke={color.flow}>
          <path d="M0-37L37 0L0 37L-37 0z" strokeWidth="2.500" strokeLinejoin="round" />
          {g.ring && <circle r="21" strokeWidth="6" />}
        </g>
      ))}
      <circle cx="31" cy="172" r="28" fill={color.brandSoft} stroke={color.brand} strokeWidth="3" />
      <circle cx="326" cy="495" r="24.500" fill="#fff" stroke={color.flow} strokeWidth="9" />
    </svg>
    {nodes.map((n) => (
      <Node key={n.text} $x={n.x} $y={n.y} $w={n.w} $h={n.h} $kind={n.kind}>
        {n.text}
      </Node>
    ))}
    {edgeLabels.map((l) => (
      <EdgeLabel key={`${l.x}-${l.y}`} $x={l.x} $y={l.y}>
        {l.text}
      </EdgeLabel>
    ))}
  </Canvas>
);

/* ---------- data ---------- */

const mainMenu = [
  { icon: <Dial />, text: "Trang chủ" },
  { icon: <Person />, text: "Trình ký điện tử" },
  { icon: <Bank />, text: "Tổ chức nhân sự" },
  { icon: <PhotoFolder />, text: "Quản lý tài liệu" },
  { icon: <Chat />, text: "Truyền thông nội bộ" },
  { icon: <FolderOutline />, text: "Quản lý dự án" },
];

const subMenu = [
  { icon: <AiOutlineFolderOpen size={29} />, text: "Hồ sơ", items: ["Dự án", "Hạng mục", "Công việc"] },
  { icon: <Loop />, text: "Quá trình", items: ["Đề nghị", "Chỉ đạo", "Thông báo", "Trình ký"] },
  { icon: <ClipboardList size={29} />, text: "Thống kê báo cáo", items: [] },
];

const crumbs = [
  { text: "Quản lý dự án", tone: "#5c6670" },
  { text: "Hồ sơ", tone: "#444" },
  { text: "Dự án", tone: "#444" },
  { text: "Dự án 01", tone: "#9aa5b3" },
  { text: "Đề nghị", tone: "#9aa5b3" },
];

const legend = [
  { line: "#b5b5b5", fill: "#fff", text: "Bước xử lý chưa đi tới" },
  { line: color.brand, fill: color.brandPale, text: "Bước xử lý đã đi qua" },
  { line: "#f99a35", fill: color.brand, text: "Bước xử lý hiện tại" },
];

const historyRows = [
  ["1", "Nguyễn Văn A", "Chuyên viên Quản trị Hạ tầng", "Phòng Quản trị Hành chính", "Lập hồ sơ", "29/08/2022 08:25"],
  ["2", "Nguyễn Văn B", "Trưởng phòng Quản trị Hành chính", "Phòng Quản trị Hành chính", "Tiếp nhận", "29/08/2022 08:25"],
];

const utilities = [
  { bg: "#f6b22b", icon: <FaSitemap size={36} />, text: "Tổ chức" },
  { bg: "#f18034", icon: <MdOutlinePeopleAlt size={36} />, text: "Danh bạ" },
  { bg: "#135dab", icon: <SignDoc />, text: "Trình ký" },
  { bg: color.brand, icon: <FaFolderOpen size={35} />, text: "Dự án" },
  { bg: "#3d5ecb", icon: <FaUsersCog size={36} />, text: "CRM" },
  { bg: "#12a44a", icon: <FourPeople />, text: "HRM" },
  { bg: "#8066d2", icon: <FaCreditCard size={35} />, text: "Tài chính" },
  { bg: "#8b8b8b", icon: <Squares />, text: "Xem thêm", raised: true },
];

const jobs = [
  { bg: "#eb4849", icon: <MdOutlineTimer size={31} />, text: "Chờ tôi xử lý" },
  { bg: "#f9b563", icon: <Gears />, text: "Đang được xử lý" },
  { bg: "#3fae37", icon: <ReviewDoc />, text: "Tôi đã xử lý" },
  { bg: "#2c6fab", icon: <CheckThin />, text: "Đã hoàn tất" },
];

const services = [
  { icon: <FaGift size={35} />, text: "Sản phẩm\nưu đãi" },
  { icon: <PhoneCall size={36} />, text: "Liên hệ\ntư vấn" },
  { icon: <Handshake />, text: "Hợp tác\ngiao dịch" },
  { icon: <FaHeadset size={36} />, text: "Chăm sóc\nkhách hàng" },
];

/* ---------- sections ---------- */

const ProcessDialog = () => (
  <Overlay>
    <Dialog role="dialog" aria-labelledby="process-title">
      <DialogHeader>
        <h1 id="process-title">Xem quy trình</h1>
        <CloseButton type="button" aria-label="Đóng">
          <Cross />
        </CloseButton>
      </DialogHeader>
      <Flow>
        <Legend>
          <svg aria-hidden="true">
            <rect
              x="1"
              y="1"
              width="99.800%"
              height="69"
              rx="10"
              fill="none"
              stroke="#c2c2c2"
              strokeWidth="1.500"
              strokeDasharray="14 7"
            />
          </svg>
          {legend.map((l) => (
            <LegendItem key={l.text}>
              <Swatch $line={l.line} $fill={l.fill} />
              {l.text}
            </LegendItem>
          ))}
        </Legend>
        <FlowChart />
      </Flow>
      <History>
        <h2>Quá trình xử lý</h2>
        <Table>
          <colgroup>
            <col style={{ width: 77 }} />
            <col style={{ width: 267 }} />
            <col style={{ width: 334 }} />
            <col style={{ width: 303 }} />
            <col style={{ width: 196 }} />
            <col />
          </colgroup>
          <thead>
            <tr>
              <HeadCell $center>STT</HeadCell>
              <HeadCell>Họ và tên</HeadCell>
              <HeadCell $strong>Chức danh</HeadCell>
              <HeadCell $strong>Đơn vị</HeadCell>
              <HeadCell $strong>Bước xử lý</HeadCell>
              <HeadCell $center>Ngày nhận</HeadCell>
            </tr>
          </thead>
          <tbody>
            {historyRows.map((row) => (
              <tr key={row[0]}>
                {row.map((value, i) => (
                  <Cell key={i} $center={i === 0 || i === 5} $muted={i < 2}>
                    {value}
                  </Cell>
                ))}
              </tr>
            ))}
          </tbody>
        </Table>
      </History>
    </Dialog>
  </Overlay>
);

const Desktop = () => (
  <Window>
    <TopBar>
      <Brand href="#">
        <Logo />
        <BrandText>
          <BrandName>HAHAHO</BrandName>
          <BrandTag>LIÊN KẾT SỨC MANH SỐ</BrandTag>
        </BrandText>
      </Brand>
      <button type="button" aria-label="Thu gọn">
        <Collapse />
      </button>
      <Crumbs>
        {crumbs.map((c) => (
          <Crumb key={c.text} $tone={c.tone}>
            {c.text}
          </Crumb>
        ))}
      </Crumbs>
      <TopActions>
        <IconButton type="button" aria-label="Thông báo">
          <BellSolid />
          <Badge>8</Badge>
        </IconButton>
        <IconButton type="button" aria-label="Người dùng">
          <BsPeopleFill size={24} />
        </IconButton>
        <Avatar type="button">K</Avatar>
      </TopActions>
    </TopBar>
    <Columns>
      <Sidebar>
        <SidebarTitle>THÔNG TIN</SidebarTitle>
        <ul>
          {mainMenu.map((m, i) => (
            <li key={m.text}>
              <MainLink href="#" $first={i === 0} $active={i === mainMenu.length - 1}>
                <IconSlot>{m.icon}</IconSlot>
                {m.text}
              </MainLink>
            </li>
          ))}
        </ul>
        <SubMenu>
          {subMenu.map((s, i) => (
            <li key={s.text}>
              <SubLink href="#" $active={i === 0}>
                <IconSlot>{s.icon}</IconSlot>
                {s.text}
              </SubLink>
              <ul>
                {s.items.map((t) => (
                  <li key={t}>
                    <LeafLink href="#" $active={t === "Dự án"}>
                      {t}
                    </LeafLink>
                  </li>
                ))}
              </ul>
            </li>
          ))}
        </SubMenu>
      </Sidebar>
      <Content>
        <TabBar>
          <Tab type="button" $active>
            Tổng quan
          </Tab>
          <Tab type="button">Trả lời</Tab>
          <Tab type="button">Chuyển tiếp</Tab>
          <FlowButton type="button">
            <Steps />
            Xem quy trình
          </FlowButton>
        </TabBar>
        <Form>
          <FieldLabels>
            <label htmlFor="project">Dự án</label>
          </FieldLabels>
          <FieldPanel $pad="22px 18px 17px" $gap={0} $space={35}>
            <Field id="project" />
          </FieldPanel>
          <FieldPanel $pad="20px 14px 13px" $gap={17} $space={41}>
            <Field aria-label="Hồ sơ" />
            <Field aria-label="Hạng mục" />
            <Field aria-label="Công việc" />
            <Field aria-label="Đề nghị" />
          </FieldPanel>
          <FieldPanel $pad="107px 18px 25px" $gap={21} $space={0}>
            <Field aria-label="Chỉ đạo" />
            <Field aria-label="Thông báo" />
            <Field aria-label="Trình ký" />
          </FieldPanel>
          <FormActions>
            <FormButton type="button" $outline $size={17}>
              <CircleX />
              Đóng
            </FormButton>
            <FormButton type="button" $size={20}>
              <Floppy />
              Lưu
            </FormButton>
          </FormActions>
        </Form>
      </Content>
    </Columns>
    <ProcessDialog />
  </Window>
);

const Mobile = () => (
  <Phone>
    <Screen>
      <StatusBar>
        <span>13:13</span>
        <StatusIcons>
          <Signal />
          <Wifi />
          <Battery />
        </StatusIcons>
      </StatusBar>
      <ScreenTitle>Trang chủ</ScreenTitle>
      <ScreenBody>
        <Waves viewBox="0 0 545 999" preserveAspectRatio="none" aria-hidden="true">
          <path d="M0 0V94C130 105 235 165 313 195S470 240 545 203V0z" />
          <path d="M0 0V333C110 353 180 300 251 258S430 156 545 156V0z" />
          <path d="M0 999V720C90 670 190 735 262 775S440 870 545 886V999z" />
          <path d="M0 999V950C130 945 220 895 310 857S470 800 545 825V999z" />
        </Waves>
        <Profile>
          <ProfileAvatar>Đ</ProfileAvatar>
          <ProfileText>
            <h3>Xin chào! Trương Vũ Đằng</h3>
            <p>Thứ 2, 08/10/2022</p>
          </ProfileText>
        </Profile>
        <SectionTitle $top={53}>Tiện ích</SectionTitle>
        <TileGrid $gap={31} $margin="0 -3px 0 -13px">
          {utilities.map((u) => (
            <li key={u.text}>
              <TileButton type="button" $gap={22}>
                <TileIcon $bg={u.bg} $raised={u.raised}>
                  {u.icon}
                </TileIcon>
                {u.text}
              </TileButton>
            </li>
          ))}
        </TileGrid>
        <SectionTitle $top={62}>Công việc của tôi</SectionTitle>
        <Cards>
          {jobs.map((j) => (
            <Card key={j.text} $bg={j.bg}>
              <Count>
                <strong>5</strong> hồ sơ
              </Count>
              <CardIcon>{j.icon}</CardIcon>
              <CardLabel>{j.text}</CardLabel>
            </Card>
          ))}
        </Cards>
        <SectionTitle $top={35}>Dịch vụ</SectionTitle>
        <TileGrid $gap={0} $margin="0 0 0 -10px">
          {services.map((s) => (
            <li key={s.text}>
              <TileButton type="button" $gap={11}>
                <TileIcon $bg="rgba(0, 0, 0, 0.2)">{s.icon}</TileIcon>
                {s.text}
              </TileButton>
            </li>
          ))}
        </TileGrid>
      </ScreenBody>
      <BottomNav>
        <a href="#" aria-label="Trang chủ">
          <Home />
        </a>
        <a href="#" aria-label="Danh mục">
          <Sliders />
        </a>
        <a href="#" aria-label="Danh bạ">
          <People />
        </a>
        <a href="#" aria-label="Thông báo">
          <BellThin />
        </a>
      </BottomNav>
    </Screen>
  </Phone>
);

export default function App() {
  return (
    <>
      <GlobalStyle />
      <Page>
        <Desktop />
        <Mobile />
      </Page>
    </>
  );
}
